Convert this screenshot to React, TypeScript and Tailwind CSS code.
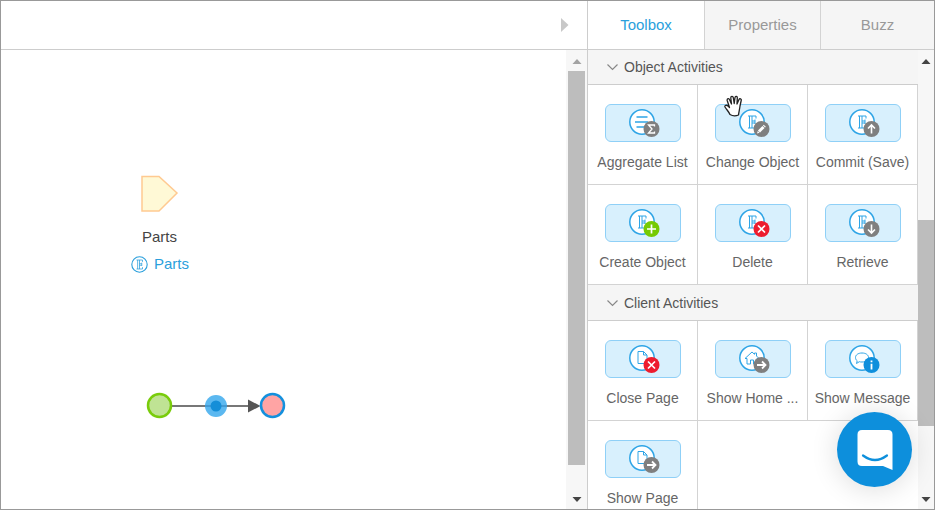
import type { ReactNode } from "react";

type Glyph = "list" | "entity" | "page" | "home" | "message";
type Badge = "sum" | "edit" | "up" | "down" | "plus" | "cross" | "right" | "info";
type Activity = { label: string; glyph: Glyph; badge: Badge };

const objectActivities: Activity[] = [
  { label: "Aggregate List", glyph: "list", badge: "sum" },
  { label: "Change Object", glyph: "entity", badge: "edit" },
  { label: "Commit (Save)", glyph: "entity", badge: "up" },
  { label: "Create Object", glyph: "entity", badge: "plus" },
  { label: "Delete", glyph: "entity", badge: "cross" },
  { label: "Retrieve", glyph: "entity", badge: "down" },
];

const clientActivities: Activity[] = [
  { label: "Close Page", glyph: "page", badge: "cross" },
  { label: "Show Home ...", glyph: "home", badge: "right" },
  { label: "Show Message", glyph: "message", badge: "info" },
  { label: "Show Page", glyph: "page", badge: "right" },
];

/* The entity mark: a hollow stem with three arms and serif ends. */
const entityOutline = "M4-3.500V-6H-4M-2.500-6V6M0-6V6M0-1H3M3-2.500V2M0 1H3M-4 6H4V3.500";

const glyphs: Record<Glyph, ReactNode> = {
  list: <path d="M-5.500-5H5.500M-7 0H6M-5.500 5H2" strokeWidth="1.500" />,
  entity: <path d={entityOutline} strokeWidth="1" />,
  page: <path d="M-4-6.500H1.500L5-3V5.500H-4ZM1.500-6.500V-3H5" strokeWidth="1" />,
  home: <path d="M-7 0.500 0-6 2.500-3.700V-5H4.500V-2L7 0.500H5V6H1.500V2H-1.500V6H-5V0.500Z" strokeWidth="1" />,
  message: (
    <path d="M0-5C4-5 6.500-3 6.500-0.500S4 4 0 4C-1 4-2 4-2.700 3.700L-5.500 5.500-4.800 2.800C-6 2-6.500 0.800-6.500-0.500-6.500-3-4-5 0-5Z" strokeWidth="1" />
  ),
};

const badgeFill: Record<Badge, string> = {
  sum: "#7f7f7f",
  edit: "#7f7f7f",
  up: "#7f7f7f",
  down: "#7f7f7f",
  right: "#7f7f7f",
  plus: "#76ca02",
  cross: "#ed1c2e",
  info: "#0f8fdc",
};

const badges: Record<Badge, ReactNode> = {
  sum: <path d="M3-2.500V-4H-3L0.500 0-3 4H3V2.500" strokeWidth="1.300" />,
  edit: (
    <g>
      <path d="M-2.500 2.500 2-2" strokeWidth="3" />
      <path d="M2.500-2.500 3.300-3.300" strokeWidth="3" />
      <path d="M-4.500 4.500-3.700 2 -2 3.700Z" fill="#fff" stroke="none" />
    </g>
  ),
  up: <path d="M0 4.500V-4M-3.500-0.500 0-4 3.500-0.500" strokeWidth="1.600" />,
  down: <path d="M0-4.500V4M-3.500 0.500 0 4 3.500 0.500" strokeWidth="1.600" />,
  right: <path d="M-4.500 0H4M0.500-3.500 4 0 0.500 3.500" strokeWidth="1.800" />,
  plus: <path d="M-4.500 0H4.500M0-4.500V4.500" strokeWidth="1.700" />,
  cross: <path d="M-3.500-3.500 3.500 3.500M3.500-3.500-3.500 3.500" strokeWidth="1.700" />,
  info: <path d="M0-4.500V-2.800M0-1.300V4.500" strokeWidth="1.800" />,
};

function ActivityIcon({ glyph, badge }: { glyph: Glyph; badge: Badge }) {
  return (
    <span className="block rounded-md border border-[#8fd0f7] bg-[#d8f0fd]">
      <svg className="block h-9 w-[74px]" viewBox="0 0 74 36" fill="none" aria-hidden="true">
        <g transform="translate(36 17)" stroke="#2fa5e6">
          <circle r="12.200" fill="#fff" strokeWidth="1.500" />
          {glyphs[glyph]}
        </g>
        <g transform="translate(45.5 24)" stroke="#fff">
          <circle r="8" fill={badgeFill[badge]} stroke="none" />
          {badges[badge]}
        </g>
      </svg>
    </span>
  );
}

function Section({ title, items }: { title: string; items: Activity[] }) {
  return (
    <section>
      <button
        type="button"
        aria-expanded="true"
        className="flex h-[35px] w-full items-center gap-1 border-b border-[#cdcdcd] pl-[18px] text-sm text-[#555]"
      >
        <svg className="h-3 w-[14px]" viewBox="0 0 14 12" fill="none" stroke="#888" aria-hidden="true">
          <path d="M1.500 3.500 6.500 8.500 11.500 3.500" strokeWidth="1.200" />
        </svg>
        {title}
      </button>
      <div className="grid grid-cols-3 bg-white">
        {items.map((item) => (
          <button
            key={item.label}
            type="button"
            className="flex h-[100px] flex-col items-center border-r border-b border-[#d3d3d3] pt-[19px] text-sm whitespace-nowrap text-[#666]"
          >
            <ActivityIcon glyph={item.glyph} badge={item.badge} />
            <span className="mt-[10px]">{item.label}</span>
          </button>
        ))}
      </div>
    </section>
  );
}

function ScrollArrow({ up, color }: { up?: boolean; color: string }) {
  return (
    <svg className="h-[21px] w-3 shrink-0" viewBox="0 0 12 21" fill={color} aria-hidden="true">
      {up ? <path d="M1.500 14 6 9 10.500 14Z" /> : <path d="M1.500 9 6 14 10.500 9Z" />}
    </svg>
  );
}

function DiagramCanvas() {
  return (
    <div className="relative min-w-0 flex-1">
      <svg className="absolute top-[124px] left-[139px] h-10 w-10" viewBox="0 0 40 40" aria-hidden="true">
        <path d="M2 2.500H19L37 19 19 37H2Z" fill="#fff9d6" stroke="#ffca91" strokeWidth="1.500" />
      </svg>
      <div className="absolute top-[177px] left-[130px] flex flex-col text-[15px] leading-5 text-[#444]">
        <span className="pl-[11px]">Parts</span>
        <a href="#parts" className="mt-[7px] flex items-center gap-[6px] text-[#2a9fdc]">
          <svg className="h-[17px] w-[17px]" viewBox="-8.5 -8.5 17 17" fill="none" stroke="#2a9fdc" aria-hidden="true">
            <circle r="7.700" strokeWidth="1.100" />
            <path d={entityOutline} transform="scale(.75)" strokeWidth="1" />
          </svg>
          Parts
        </a>
      </div>
      <svg className="absolute top-[340px] left-[144px] h-8 w-[144px]" viewBox="0 0 144 32" role="img" aria-label="Flow from start to end">
        <path d="M27 16H105" stroke="#777" strokeWidth="2" />
        <path d="M103 9.500 115.500 16 103 22.500Z" fill="#555" />
        <circle cx="14.500" cy="15.500" r="11.500" fill="#bfe394" stroke="#79cc0b" strokeWidth="2.500" />
        <circle cx="71" cy="16" r="11" fill="#5bb8f0" />
        <path d="M60 16H82" stroke="#3b8fc8" strokeWidth="1.500" />
        <circle cx="71" cy="16" r="5.500" fill="#148ed8" />
        <circle cx="127.500" cy="15.500" r="11.500" fill="#ffa4a4" stroke="#1490dd" strokeWidth="2.500" />
      </svg>
    </div>
  );
}

export default function App() {
  return (
    <div className="flex h-screen w-full overflow-hidden border border-[#999] bg-white font-['Liberation_Sans',Arial,sans-serif]">
      <main className="flex min-w-0 flex-1 flex-col">
        <header className="flex h-[49px] shrink-0 items-center justify-end border-b border-[#cdcdcd] pr-[18px]">
          <button type="button" aria-label="Expand">
            <svg className="h-[14px] w-2" viewBox="0 0 8 14" fill="#c8c8c8" aria-hidden="true">
              <path d="M0 0 7.500 7 0 14Z" />
            </svg>
          </button>
        </header>
        <div className="flex min-h-0 flex-1">
          <DiagramCanvas />
          <div className="flex w-[21px] flex-col items-center bg-[#f7f7f7]">
            <ScrollArrow up color="#a3a3a3" />
            <div className="h-[394px] w-[17px] bg-[#bdbdbd]" />
            <div className="flex-1" />
            <ScrollArrow color="#444" />
          </div>
        </div>
      </main>

      <aside className="flex w-[347px] shrink-0 flex-col border-l border-[#cdcdcd] bg-[#f5f5f5]">
        <div role="tablist" className="grid h-[49px] shrink-0 grid-cols-[117px_116px_1fr] border-b border-[#cdcdcd] text-[15px] text-[#999]">
          <button type="button" role="tab" aria-selected="true" className="border-r border-[#d3d3d3] bg-white text-[#2a9fdc]">
            Toolbox
          </button>
          <button type="button" role="tab" aria-selected="false" className="border-r border-[#d3d3d3]">
            Properties
          </button>
          <button type="button" role="tab" aria-selected="false">
            Buzz
          </button>
        </div>
        <div className="flex min-h-0 flex-1">
          <div className="relative min-w-0 flex-1 space-y-px overflow-hidden bg-[#f5f5f5]">
            <Section title="Object Activities" items={objectActivities} />
            <Section title="Client Activities" items={clientActivities} />
            <svg className="absolute top-[45px] left-[136px] h-[22px] w-5" viewBox="0 0 20 22" fill="#fff" stroke="#222" strokeLinejoin="round" strokeLinecap="round" aria-hidden="true">
              <path
                d="M6 19.500C5 17 2.500 14.500 1 12 0.300 10.500 2.500 9.500 4 11L5.500 12.500 3.200 5.500C2.800 3.500 5 3 5.600 4.800L7.500 9 6.800 3C6.700 1 9 0.900 9.300 2.700L10.200 8.500 11 2.500C11.300 0.900 13.500 1.200 13.300 3L13 9 15 4.500C15.700 3 17.700 3.800 17.200 5.500L16 11C15.600 14.500 15 16.500 14.500 20 12 21 8.500 21 6 19.500Z"
                strokeWidth="1.300"
              />
            </svg>
          </div>
          <div className="flex w-4 flex-col items-center bg-[#f7f7f7]">
            <ScrollArrow up color="#444" />
            <div className="basis-[149px]" />
            <div className="h-[206px] w-full bg-[#bdbdbd]" />
            <div className="flex-1" />
            <ScrollArrow color="#444" />
          </div>
        </div>
      </aside>

      <button
        type="button"
        aria-label="Open chat"
        className="fixed right-[23px] bottom-[23px] flex h-[75px] w-[75px] items-center justify-center rounded-full bg-[#0d8fdc] shadow-[0_2px_28px_rgba(0,0,0,0.14)]"
      >
        <svg className="h-10 w-9" viewBox="0 0 36 40" fill="none" aria-hidden="true">
          <path d="M5 0H31Q35.500 0 35.500 4.500V40L26 36H5Q0.500 36 0.500 31.500V4.500Q0.500 0 5 0Z" fill="#fff" />
          <path d="M6 25.500Q18 34.500 30 25.500" stroke="#0d8fdc" strokeWidth="2.200" strokeLinecap="round" />
        </svg>
      </button>
    </div>
  );
}
